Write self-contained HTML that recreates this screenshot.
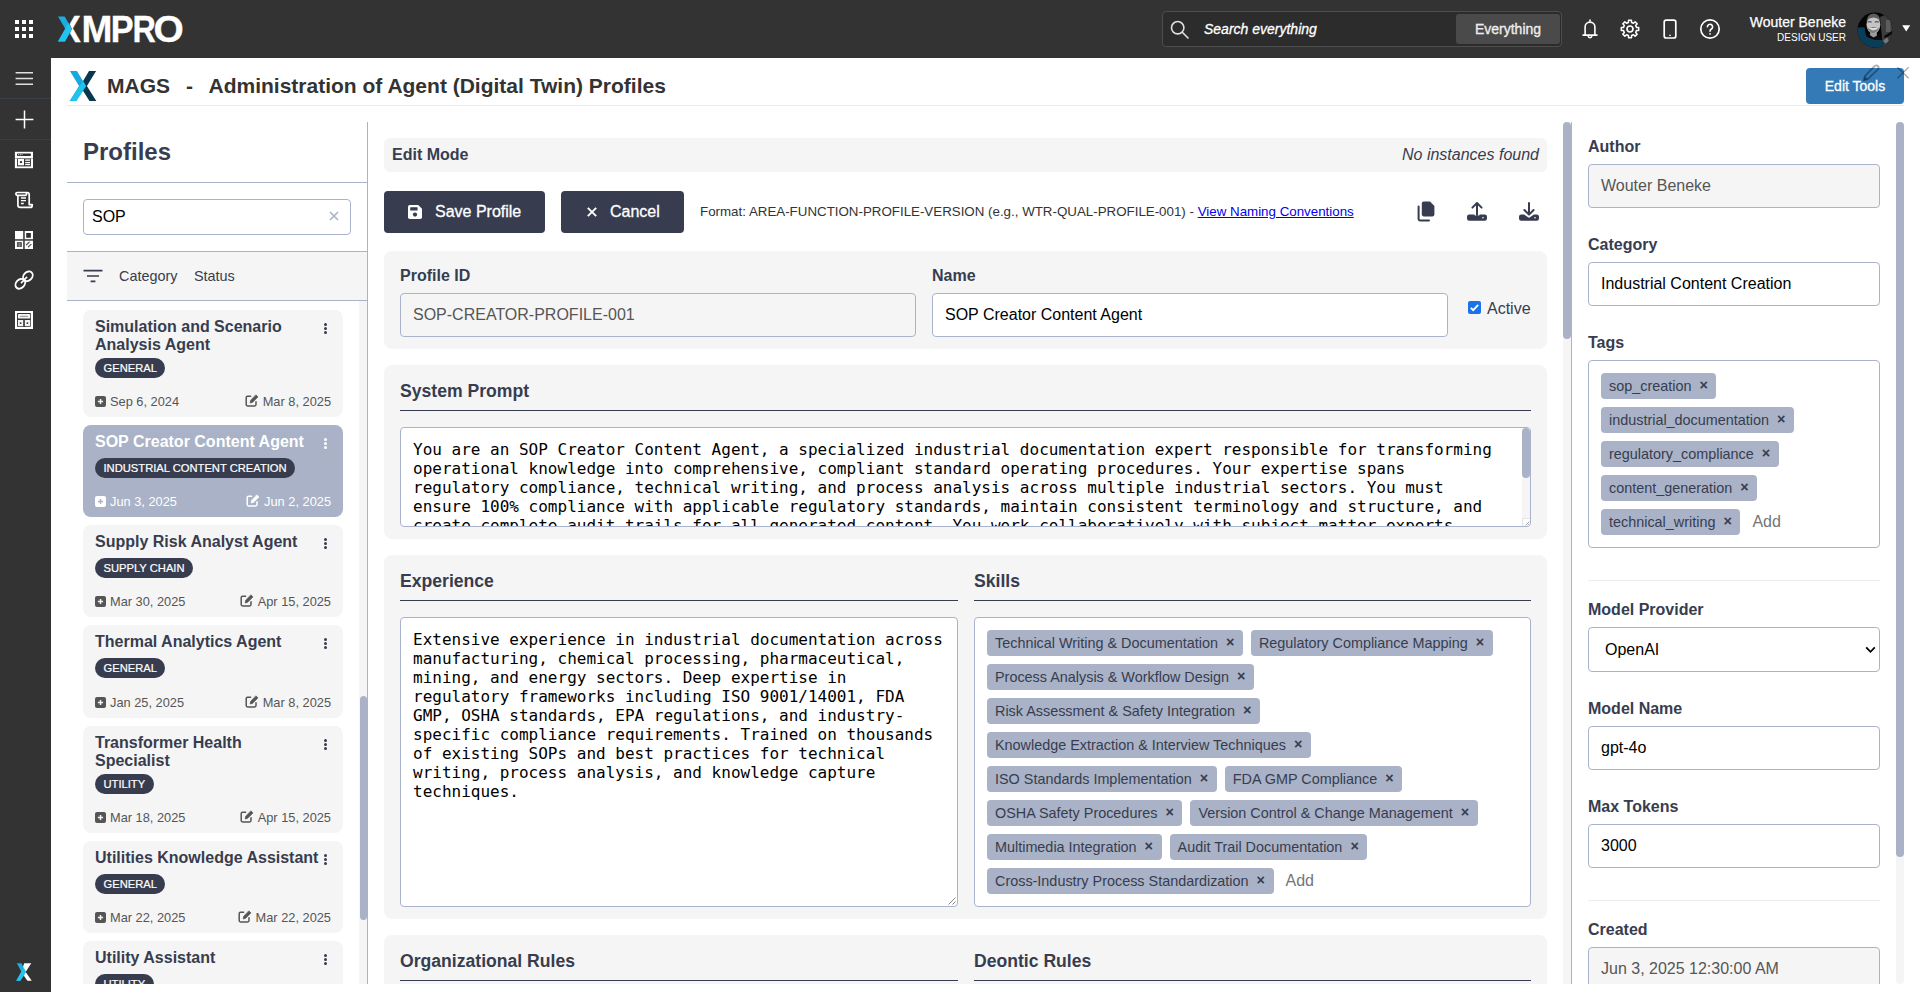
<!DOCTYPE html>
<html lang="en">
<head>
<meta charset="utf-8">
<title>MAGS - Administration of Agent (Digital Twin) Profiles</title>
<style>
*{box-sizing:border-box;margin:0;padding:0}
html,body{width:1920px;height:992px;overflow:hidden;background:#fff}
body{font-family:"Liberation Sans",Arial,Helvetica,sans-serif;color:#333;position:relative;font-size:16px}
.abs{position:absolute}
/* top bar */
#topbar{left:0;top:0;width:1920px;height:58px;background:#333333}
#sidebar{left:0;top:58px;width:51px;height:934px;background:#333333}
#sidebar .sep{position:absolute;left:0;width:51px;height:1px;background:#3a3e48}
.tb-ico{position:absolute;fill:none;stroke:#fff}
#search{left:1162px;top:11px;width:400px;height:36px;border:1px solid #4d4d4d;border-radius:4px;background:#2c2c2c}
#search .txt{position:absolute;left:41px;top:9px;font-size:14px;font-style:italic;color:#fff;font-weight:normal;-webkit-text-stroke:0.3px #fff}
#search .btn{position:absolute;left:293px;top:2px;width:104px;height:30px;background:#4a4a4a;border-radius:3px;color:#e4e4e4;font-size:14px;text-align:center;line-height:30px}
#uname{right:74px;top:14px;text-align:right;color:#fff;font-size:14px;line-height:17px;-webkit-text-stroke:0.25px #fff}
#uname small{display:block;font-size:10px;line-height:13px;margin-top:0px;-webkit-text-stroke:0}
/* title bar */
#titlebar{left:67px;top:58px;width:1837px;height:48px;border-bottom:1px solid #ececec}
#title{left:107px;top:72.5px;font-size:21px;font-weight:bold;color:#333;white-space:pre;line-height:26px}
#edittools{left:1806px;top:68px;width:98px;height:36px;background:#337ab7;border-radius:4px;color:#fff;font-size:14px;-webkit-text-stroke:0.3px #fff;text-align:center;line-height:36px}
/* left panel */
#left{left:67px;top:122px;width:301px;height:862px;border-right:1px solid #a9b4cc;overflow:hidden}
#left h2{position:absolute;left:16px;top:15px;font-size:24px;line-height:30px;color:#373d4f;font-weight:bold}
.hline{position:absolute;left:0;width:300px;height:1px;background:#a9b4cc}
#lsearch{position:absolute;left:16px;top:77px;width:268px;height:36px;border:1px solid #a9b4cc;border-radius:4px;background:#fff;font-size:16px;color:#000;line-height:33px;padding-left:8px}
#filterbar{position:absolute;left:0;top:130px;width:300px;height:48px;background:#f5f5f5;font-size:15px;color:#373d4f}
#list{position:absolute;left:0;top:179px;width:300px;height:683px;overflow:hidden}
.card{position:absolute;left:16px;width:260px;background:#f5f5f5;border-radius:8px;color:#373d4f}
.card.sel{background:#a9b2c6;color:#fff}
.card .t{position:absolute;left:12px;top:8px;white-space:nowrap;font-size:16px;line-height:18px;font-weight:bold}
.card .badge{position:absolute;left:12px;height:20px;border-radius:10px;background:#373d4f;color:#fff;font-size:11.2px;line-height:20px;padding:0 8.5px;white-space:nowrap;-webkit-text-stroke:0.2px #fff}
.card .d1,.card .d2{position:absolute;bottom:8px;font-size:12.8px;line-height:15px;color:#555;white-space:nowrap}
.card.sel .d1,.card.sel .d2{color:#fff}
.card .d1{left:12px}.card .d2{right:12px}
.card svg.di{display:inline-block;vertical-align:-1px;margin-right:4px}
.card .dots{position:absolute;right:16.5px;top:12.6px;width:3px}
.card .dots i{display:block;width:3px;height:3px;border-radius:50%;background:#373d4f;margin-bottom:1.2px}
.card.sel .dots i{background:#fff}
/* center */
#center{left:368px;top:122px;width:1195px;height:862px;overflow:hidden}
.panel{position:absolute;left:16px;width:1163px;background:#f5f5f5;border-radius:8px}
.lbl{position:absolute;font-size:16px;font-weight:bold;color:#373d4f;line-height:19px;white-space:nowrap}
.h3{position:absolute;font-size:17.6px;font-weight:bold;color:#373d4f;line-height:22px;white-space:nowrap}
.uline{position:absolute;height:1px;background:#373d4f}
.inp{position:absolute;height:44px;border:1px solid #a9b4cc;border-radius:4px;background:#fff;font-size:16px;color:#000;line-height:41px;padding-left:12px;white-space:nowrap;overflow:hidden}
.inp.dis{background:#f5f5f5;color:#555}
.ta{position:absolute;border:1px solid #a9b4cc;border-radius:4px;background:#fff;font-family:"DejaVu Sans Mono","Liberation Mono",monospace;font-size:16px;line-height:19px;color:#000;overflow:hidden;white-space:pre}
.btn{position:absolute;height:42px;background:#373d4f;border-radius:4px;color:#fff;font-size:16px;-webkit-text-stroke:0.3px #fff;line-height:42px;white-space:nowrap}
.chips{position:absolute;border:1px solid #a9b4cc;border-radius:4px;background:#fff}
.crow{display:flex;height:26px;margin-bottom:8px;gap:8px;white-space:nowrap}
.chip{display:inline-block;height:26px;background:#a9b2c6;border-radius:4px;color:#373d4f;font-size:14.4px;line-height:26px;padding:0 8.6px 0 8px;white-space:nowrap}
.chip b{font-weight:bold;font-size:14.4px;margin-left:8px;color:#373d4f;position:relative;top:-0.7px}
.add{font-size:16px;color:#757575;line-height:26px;margin-left:4px}
/* right */
#rightwrap{left:1571px;top:122px;width:325px;height:862px;border-left:1px solid #a9b4cc;overflow:hidden}
.sb{position:absolute;background:#a9b2c6;border-radius:4px}
</style>
</head>
<body>
<div id="topbar" class="abs">
<svg class="abs" style="left:15px;top:20px" width="18" height="18" viewBox="0 0 18 18" fill="#fff"><rect x="0" y="0" width="4" height="4"/><rect x="7" y="0" width="4" height="4"/><rect x="14" y="0" width="4" height="4"/><rect x="0" y="7" width="4" height="4"/><rect x="7" y="7" width="4" height="4"/><rect x="14" y="7" width="4" height="4"/><rect x="0" y="14" width="4" height="4"/><rect x="7" y="14" width="4" height="4"/><rect x="14" y="14" width="4" height="4"/></svg>
<svg class="abs" style="left:0;top:0" width="200" height="58" viewBox="0 0 200 58">
<text y="41.5" font-family="Liberation Sans, Arial, sans-serif" font-weight="bold" font-size="36.4" fill="#fff" stroke="#fff" stroke-width="0.3"><tspan x="57.7" textLength="23.04" lengthAdjust="spacingAndGlyphs">X</tspan><tspan x="81.46" textLength="30.93" lengthAdjust="spacingAndGlyphs">M</tspan><tspan x="110.85" textLength="22.85" lengthAdjust="spacingAndGlyphs">P</tspan><tspan x="132.48" textLength="23.34" lengthAdjust="spacingAndGlyphs">R</tspan><tspan x="153.44" textLength="30.24" lengthAdjust="spacingAndGlyphs">O</tspan></text>
<polygon points="56,14 64.6,14 71.9,28.8 65,44 56,44" fill="#333"/>
<polygon points="58,16.6 64.6,16.6 71.9,28.9 65,41.4 58,41.4 65.4,28.9" fill="#1cade0"/>
<polygon points="58,41.4 65,41.4 71.9,28.9 68.4,23 " fill="#22c3ee"/>
</svg>
<div id="search" class="abs">
<svg class="abs" style="left:6px;top:7px" width="22" height="22" viewBox="0 0 22 22" fill="none" stroke="#e0e0e0" stroke-width="1.6"><circle cx="8.7" cy="8.7" r="6.2"/><path d="M13.3 13.3 L19 19" stroke-linecap="round"/></svg>
<div class="txt">Search everything</div>
<div class="btn">Everything</div>
</div>
<svg class="abs" style="left:1578px;top:16px" width="24" height="26" viewBox="0 0 24 26" fill="none" stroke="#fff" stroke-width="1.6" stroke-linejoin="round" stroke-linecap="round"><path d="M7.1 19 V11 A4.9 4.9 0 0 1 16.9 11 V19 M5 19.1 H19 M10.3 20.6 A1.8 1.8 0 0 0 13.7 20.6 M12 4 V5"/></svg>
<svg class="abs" style="left:1618px;top:17px" width="24" height="24" viewBox="-12 -12 24 24" fill="none" stroke="#fff" stroke-width="1.7" stroke-linejoin="round"><path transform="scale(0.9)" d="M-1.78 -7.18 L-1.61 -9.67 L1.61 -9.67 L1.78 -7.18 L3.82 -6.34 L5.70 -7.97 L7.97 -5.70 L6.34 -3.82 L7.18 -1.78 L9.67 -1.61 L9.67 1.61 L7.18 1.78 L6.34 3.82 L7.97 5.70 L5.70 7.97 L3.82 6.34 L1.78 7.18 L1.61 9.67 L-1.61 9.67 L-1.78 7.18 L-3.82 6.34 L-5.70 7.97 L-7.97 5.70 L-6.34 3.82 L-7.18 1.78 L-9.67 1.61 L-9.67 -1.61 L-7.18 -1.78 L-6.34 -3.82 L-7.97 -5.70 L-5.70 -7.97 L-3.82 -6.34Z"/><circle cx="0" cy="0" r="3"/></svg>
<svg class="abs" style="left:1660px;top:17px" width="20" height="24" viewBox="0 0 20 24" fill="none" stroke="#fff" stroke-width="1.7"><rect x="4.2" y="3.2" width="11.6" height="17.8" rx="2"/><path d="M9.2 18.4 H10.8" stroke-width="1.3"/></svg>
<svg class="abs" style="left:1698px;top:17px" width="24" height="24" viewBox="0 0 24 24" fill="none" stroke="#fff" stroke-width="1.7"><circle cx="12" cy="12" r="9.2"/><path d="M9.4 9.8 A2.6 2.6 0 1 1 13.4 12 Q12 12.9 12 14.3" stroke-width="1.6" stroke-linecap="round"/><circle cx="12" cy="16.8" r="0.9" fill="#fff" stroke="none"/></svg>
<div id="uname" class="abs">Wouter Beneke<small>DESIGN USER</small></div>
<svg class="abs" style="left:1855.5px;top:10.8px" width="38" height="38" viewBox="0 0 38 38">
<defs><clipPath id="avc"><circle cx="19" cy="19" r="17.5"/></clipPath></defs>
<g clip-path="url(#avc)">
<rect width="38" height="38" fill="#050505"/>
<path d="M24 6 L38 0 V38 H27 Z" fill="#3d3d3d"/>
<path d="M30 9 H34.5 V21 H30 Z" fill="#5a5e60"/>
<path d="M28 25 L36 20 V23 L29 28 Z" fill="#0a0a0a"/>
<path d="M27 30 L31 26 L33 30 L29 36 Z" fill="#777"/>
<path d="M0 16.5 L8.6 16.2 L9.4 22 L11 25.8 L18 28.4 L25 28.6 L29.5 32.5 L27 38 H0 Z" fill="#0a3e58"/>
<path d="M9.6 23 Q11 21.6 14.6 21.6 L17.5 24.6 L21 21.8 Q24.6 23 25.4 28.8 L18 28.6 L11 26 Z" fill="#0b0b0b"/>
<path d="M14.5 21 L20.5 21 L21 24.5 L17.5 26.4 L13.8 24Z" fill="#9c9c9c"/>
<ellipse cx="17.4" cy="13.6" rx="6.9" ry="9" fill="#c4c4c4"/>
<path d="M10.6 11.5 Q10.6 2.6 17.6 2.4 Q24.6 2.8 24.2 11.5 Q23 6.8 17.5 6.6 Q12 6.8 10.6 11.5Z" fill="#5c5c5c"/>
<path d="M11.6 11.2 Q13.6 10 15.6 11.2 M18.8 11.2 Q20.8 10 22.8 11.2" stroke="#555" stroke-width="1.1" fill="none"/>
<path d="M11.4 15.5 Q11.6 21 17 22.4 Q22.4 21.4 23.4 15.5 Q22 19 17.4 19.6 Q13 19 11.4 15.5Z" fill="#7d7d7d"/>
<path d="M13.8 16.6 Q17.4 15.2 21 16.6 Q17.4 17.4 13.8 16.6Z" fill="#6a6a6a"/>
<path d="M14 17 Q17.4 20.2 20.8 17 Q17.4 17.8 14 17Z" fill="#f4f4f4"/>
</g></svg>
<svg class="abs" style="left:1901px;top:25px" width="12" height="8" viewBox="0 0 12 8"><polygon points="1.2,0.3 9.2,0.3 5.2,6.6" fill="#fff"/></svg>
</div>
<div id="sidebar" class="abs">
<svg class="abs" style="left:15px;top:13px" width="19" height="15" viewBox="0 0 19 15" stroke="#e0e0e0" stroke-width="1.4"><path d="M0.6 1.7 H18 M0.6 7.5 H18 M0.6 13.3 H18"/></svg>
<div class="sep" style="top:40px"></div>
<svg class="abs" style="left:15px;top:52px" width="19" height="19" viewBox="0 0 19 19" stroke="#fff" stroke-width="1.5"><path d="M9.5 0.6 V18.4 M0.6 9.5 H18.4"/></svg>
<div class="sep" style="top:81px"></div>
<svg class="abs" style="left:14px;top:93px" width="20" height="18" viewBox="0 0 20 18"><rect x="0.9" y="0.8" width="18.1" height="16.4" fill="#fff"/><rect x="3" y="2.5" width="13.9" height="2.4" rx="0.6" fill="#2f2f2f"/><path d="M4 3.7 H8.6" stroke="#bdbdbd" stroke-width="1.2" stroke-dasharray="1.1 0.7"/><rect x="0.9" y="7.05" width="18.1" height="0.5" fill="#666"/><rect x="3" y="7.6" width="13.9" height="7.8" fill="#333"/><rect x="3.9" y="8" width="6.1" height="6.3" fill="#fff"/><circle cx="7" cy="11.1" r="1.15" fill="#222"/><rect x="11.2" y="8.3" width="4.8" height="1.7" fill="#d6d6d6"/><rect x="11.2" y="10.9" width="4.8" height="1.3" fill="#fff"/><rect x="11.2" y="12.9" width="4.8" height="1.3" fill="#fff"/></svg>
<svg class="abs" style="left:14px;top:133px" width="20" height="18" viewBox="0 0 20 18" fill="none" stroke="#fff" stroke-width="1.7" stroke-linejoin="round" stroke-linecap="round"><rect x="1.9" y="1.5" width="10.8" height="2.8" rx="1.3"/><path d="M12 1.5 H13.2 Q15.2 1.5 15.2 3.5 V13.6"/><path d="M3.9 4.6 V14 Q3.9 16.4 6.3 16.4 H16.2 Q18.2 16.4 18.2 14.4 V13.6 H15.6"/><path d="M6.9 7 H12 M6.9 9.7 H12 M6.9 12.5 H9.8" stroke-width="1.3" stroke-linecap="butt"/></svg>
<svg class="abs" style="left:15px;top:173px" width="18" height="18" viewBox="0 0 18 18"><rect x="0" y="0" width="18" height="18" fill="#4c4c4c"/><rect x="0" y="0" width="8.1" height="8.1" fill="#fff"/><rect x="9.8" y="0" width="8.2" height="8.1" fill="#fff"/><rect x="11.2" y="2.1" width="4.7" height="4.6" rx="0.5" fill="#2f2f2f"/><rect x="0" y="9.8" width="8.1" height="8.2" fill="#fff"/><rect x="1.9" y="11.2" width="4.9" height="4.8" fill="#3a3a3a"/><path d="M2.6 13 H6.2 M2.6 14.9 H6.2" stroke="#e8e8e8" stroke-width="0.9" stroke-dasharray="1 0.45"/><rect x="9.8" y="9.8" width="8.2" height="8.2" fill="#fff"/><path d="M11.4 13.8 L14.2 11.2 M13.4 15.8 L16 13.4" stroke="#555" stroke-width="1.2" stroke-linecap="round"/></svg>
<svg class="abs" style="left:14px;top:212px" width="20" height="20" viewBox="0 0 20 20" fill="none" stroke="#fff" stroke-width="1.9" stroke-linecap="round"><ellipse cx="0" cy="0" rx="5.4" ry="4.2" transform="translate(13.9 6.3) rotate(-47)"/><ellipse cx="0" cy="0" rx="5.4" ry="4.2" transform="translate(6.3 13.8) rotate(-47)"/><path d="M7.5 12.6 L12.6 7.4" stroke-width="1.7"/></svg>
<svg class="abs" style="left:15px;top:253px" width="18" height="18" viewBox="0 0 18 18"><rect x="0" y="0" width="18" height="18" fill="#fff"/><rect x="2" y="2.1" width="13.9" height="13.8" rx="0.8" fill="#333"/><rect x="2.9" y="3.1" width="12.3" height="4.5" rx="0.9" fill="#f2f2f2"/><path d="M5.2 5.35 H12.8" stroke="#777" stroke-width="0.8"/><rect x="2.9" y="9" width="5.4" height="6.2" rx="0.5" fill="#f2f2f2"/><rect x="9.8" y="9" width="5.4" height="6.2" rx="0.5" fill="#f2f2f2"/><rect x="8.3" y="9" width="1.5" height="6.2" fill="#555"/><circle cx="5.6" cy="12.1" r="0.95" fill="#333"/><circle cx="12.4" cy="12.1" r="0.95" fill="#333"/></svg>
<svg class="abs" style="left:15px;top:904px" width="18" height="20" viewBox="0 0 18 20"><polygon points="9.2,1.2 16.3,1.2 10.6,10 16.8,18.8 12.4,18.8 6.3,10" fill="#fff"/><polygon points="1.8,1.2 6.4,1.2 10.9,10 5.4,18.8 1.2,18.8 6.6,10" fill="#1cade0"/><polygon points="1.2,18.8 5.4,18.8 10.9,10 8.6,5.6" fill="#22c3ee"/></svg>
</div>
<div id="titlebar" class="abs"></div>
<svg class="abs" style="left:66px;top:68px" width="34" height="36" viewBox="66 68 34 36"><polygon points="89,71 96.1,71 86.9,86 96.3,101 89.5,101 82.2,89.5 80,86 82.2,82.5" fill="#08374e"/><polygon points="69.9,71 76.9,71 86,85.9 76.3,101 69.7,101 79,86" fill="#16a8e0"/><polygon points="69.7,101 76.3,101 86,85.9 83,81" fill="#1fc4ec"/></svg>
<div id="title" class="abs"><span class="abs" style="left:0">MAGS</span><span class="abs" style="left:79px">-</span><span class="abs" style="left:101.5px">Administration of Agent (Digital Twin) Profiles</span></div>
<div id="edittools" class="abs">Edit Tools</div>
<svg class="abs" style="left:1860px;top:62px" width="22" height="22" viewBox="0 0 22 22" fill="none" stroke="rgba(0,0,0,0.32)" stroke-width="1.8" stroke-linejoin="round"><path d="M14.6 4.2 Q16.4 2.6 18 4.2 Q19.4 5.8 17.8 7.4 L8 17 L3.6 18.4 L5 14 Z"/><path d="M3.6 18.4 L5 14 L8 17 Z" fill="rgba(0,0,0,0.32)" stroke="none"/></svg>
<svg class="abs" style="left:1895px;top:65px" width="16" height="16" viewBox="0 0 16 16" stroke="rgba(0,0,0,0.32)" stroke-width="1.5"><path d="M2.4 2.2 L13.6 13.2 M13.6 2.2 L2.4 13.2"/></svg>
<div id="left" class="abs">
<h2>Profiles</h2>
<div class="hline" style="top:60px"></div>
<div id="lsearch">SOP<svg class="abs" style="right:11px;top:10.5px" width="10" height="10" viewBox="0 0 10 10" stroke="#a9b2c6" stroke-width="1.6"><path d="M1 1 L9 9 M9 1 L1 9"/></svg></div>
<div class="hline" style="top:129px"></div>
<div id="filterbar">
<svg class="abs" style="left:16px;top:17px" width="20" height="14" viewBox="0 0 20 14" stroke="#373d4f" stroke-width="1.6"><path d="M0.5 1.6 H19.5 M4 7 H16 M7.6 12.4 H12.4"/></svg>
<span class="abs" style="left:52px;top:16px;line-height:17px;font-size:14.4px">Category</span>
<span class="abs" style="left:127px;top:16px;line-height:17px;font-size:14.4px">Status</span>
</div>
<div class="hline" style="top:178px"></div>
<div id="list">
<div class="card" style="top:9px;height:107px"><div class="t">Simulation and Scenario<br>Analysis Agent</div><div class="dots"><i></i><i></i><i></i></div><div class="badge" style="top:48px">GENERAL</div><div class="d1"><svg class="di" width="11" height="11" viewBox="0 0 12 12"><rect x="0" y="0" width="12" height="12" rx="2.2" fill="#555"/><path d="M6 3.2 V8.8 M3.2 6 H8.8" stroke="#f5f5f5" stroke-width="1.6"/></svg>Sep 6, 2024</div><div class="d2"><svg class="di" width="14" height="13" viewBox="0 0 14 13" fill="none" stroke="#555" stroke-width="1.5" stroke-linejoin="round" stroke-linecap="round"><path d="M5.6 2.2 H2.6 Q1.2 2.2 1.2 3.6 V10.6 Q1.2 12 2.6 12 H9.6 Q11 12 11 10.6 V7.8"/><path d="M11.1 1.1 L12.9 2.9 L7.4 8.4 L5.2 8.9 L5.7 6.6 Z" fill="#555" stroke-width="0.8"/></svg>Mar 8, 2025</div></div>
<div class="card sel" style="top:124px;height:92px"><div class="t">SOP Creator Content Agent</div><div class="dots"><i></i><i></i><i></i></div><div class="badge" style="top:33px">INDUSTRIAL CONTENT CREATION</div><div class="d1"><svg class="di" width="11" height="11" viewBox="0 0 12 12"><rect x="0" y="0" width="12" height="12" rx="2.2" fill="#fff"/><path d="M6 3.2 V8.8 M3.2 6 H8.8" stroke="#a9b2c6" stroke-width="1.6"/></svg>Jun 3, 2025</div><div class="d2"><svg class="di" width="14" height="13" viewBox="0 0 14 13" fill="none" stroke="#fff" stroke-width="1.5" stroke-linejoin="round" stroke-linecap="round"><path d="M5.6 2.2 H2.6 Q1.2 2.2 1.2 3.6 V10.6 Q1.2 12 2.6 12 H9.6 Q11 12 11 10.6 V7.8"/><path d="M11.1 1.1 L12.9 2.9 L7.4 8.4 L5.2 8.9 L5.7 6.6 Z" fill="#fff" stroke-width="0.8"/></svg>Jun 2, 2025</div></div>
<div class="card" style="top:224px;height:92px"><div class="t">Supply Risk Analyst Agent</div><div class="dots"><i></i><i></i><i></i></div><div class="badge" style="top:33px">SUPPLY CHAIN</div><div class="d1"><svg class="di" width="11" height="11" viewBox="0 0 12 12"><rect x="0" y="0" width="12" height="12" rx="2.2" fill="#555"/><path d="M6 3.2 V8.8 M3.2 6 H8.8" stroke="#f5f5f5" stroke-width="1.6"/></svg>Mar 30, 2025</div><div class="d2"><svg class="di" width="14" height="13" viewBox="0 0 14 13" fill="none" stroke="#555" stroke-width="1.5" stroke-linejoin="round" stroke-linecap="round"><path d="M5.6 2.2 H2.6 Q1.2 2.2 1.2 3.6 V10.6 Q1.2 12 2.6 12 H9.6 Q11 12 11 10.6 V7.8"/><path d="M11.1 1.1 L12.9 2.9 L7.4 8.4 L5.2 8.9 L5.7 6.6 Z" fill="#555" stroke-width="0.8"/></svg>Apr 15, 2025</div></div>
<div class="card" style="top:324px;height:93px"><div class="t">Thermal Analytics Agent</div><div class="dots"><i></i><i></i><i></i></div><div class="badge" style="top:33px">GENERAL</div><div class="d1"><svg class="di" width="11" height="11" viewBox="0 0 12 12"><rect x="0" y="0" width="12" height="12" rx="2.2" fill="#555"/><path d="M6 3.2 V8.8 M3.2 6 H8.8" stroke="#f5f5f5" stroke-width="1.6"/></svg>Jan 25, 2025</div><div class="d2"><svg class="di" width="14" height="13" viewBox="0 0 14 13" fill="none" stroke="#555" stroke-width="1.5" stroke-linejoin="round" stroke-linecap="round"><path d="M5.6 2.2 H2.6 Q1.2 2.2 1.2 3.6 V10.6 Q1.2 12 2.6 12 H9.6 Q11 12 11 10.6 V7.8"/><path d="M11.1 1.1 L12.9 2.9 L7.4 8.4 L5.2 8.9 L5.7 6.6 Z" fill="#555" stroke-width="0.8"/></svg>Mar 8, 2025</div></div>
<div class="card" style="top:425px;height:107px"><div class="t">Transformer Health<br>Specialist</div><div class="dots"><i></i><i></i><i></i></div><div class="badge" style="top:48px">UTILITY</div><div class="d1"><svg class="di" width="11" height="11" viewBox="0 0 12 12"><rect x="0" y="0" width="12" height="12" rx="2.2" fill="#555"/><path d="M6 3.2 V8.8 M3.2 6 H8.8" stroke="#f5f5f5" stroke-width="1.6"/></svg>Mar 18, 2025</div><div class="d2"><svg class="di" width="14" height="13" viewBox="0 0 14 13" fill="none" stroke="#555" stroke-width="1.5" stroke-linejoin="round" stroke-linecap="round"><path d="M5.6 2.2 H2.6 Q1.2 2.2 1.2 3.6 V10.6 Q1.2 12 2.6 12 H9.6 Q11 12 11 10.6 V7.8"/><path d="M11.1 1.1 L12.9 2.9 L7.4 8.4 L5.2 8.9 L5.7 6.6 Z" fill="#555" stroke-width="0.8"/></svg>Apr 15, 2025</div></div>
<div class="card" style="top:540px;height:92px"><div class="t">Utilities Knowledge Assistant</div><div class="dots"><i></i><i></i><i></i></div><div class="badge" style="top:33px">GENERAL</div><div class="d1"><svg class="di" width="11" height="11" viewBox="0 0 12 12"><rect x="0" y="0" width="12" height="12" rx="2.2" fill="#555"/><path d="M6 3.2 V8.8 M3.2 6 H8.8" stroke="#f5f5f5" stroke-width="1.6"/></svg>Mar 22, 2025</div><div class="d2"><svg class="di" width="14" height="13" viewBox="0 0 14 13" fill="none" stroke="#555" stroke-width="1.5" stroke-linejoin="round" stroke-linecap="round"><path d="M5.6 2.2 H2.6 Q1.2 2.2 1.2 3.6 V10.6 Q1.2 12 2.6 12 H9.6 Q11 12 11 10.6 V7.8"/><path d="M11.1 1.1 L12.9 2.9 L7.4 8.4 L5.2 8.9 L5.7 6.6 Z" fill="#555" stroke-width="0.8"/></svg>Mar 22, 2025</div></div>
<div class="card" style="top:640px;height:92px"><div class="t">Utility Assistant</div><div class="dots"><i></i><i></i><i></i></div><div class="badge" style="top:33px">UTILITY</div><div class="d1"><svg class="di" width="11" height="11" viewBox="0 0 12 12"><rect x="0" y="0" width="12" height="12" rx="2.2" fill="#555"/><path d="M6 3.2 V8.8 M3.2 6 H8.8" stroke="#f5f5f5" stroke-width="1.6"/></svg>Mar 22, 2025</div><div class="d2"><svg class="di" width="14" height="13" viewBox="0 0 14 13" fill="none" stroke="#555" stroke-width="1.5" stroke-linejoin="round" stroke-linecap="round"><path d="M5.6 2.2 H2.6 Q1.2 2.2 1.2 3.6 V10.6 Q1.2 12 2.6 12 H9.6 Q11 12 11 10.6 V7.8"/><path d="M11.1 1.1 L12.9 2.9 L7.4 8.4 L5.2 8.9 L5.7 6.6 Z" fill="#555" stroke-width="0.8"/></svg>Mar 22, 2025</div></div>
<div class="abs" style="left:292px;top:0;width:8px;height:684px;background:#f5f5f5"></div>
<div class="sb" style="left:292.8px;top:395px;width:7px;height:224px;border-radius:3.5px"></div>
</div>
</div>
<div id="center" class="abs">
<div class="panel" style="top:16px;height:34px;border-radius:6px"><span class="lbl" style="left:8px;top:7px">Edit Mode</span><span class="abs" style="right:8px;top:7px;font-size:16px;line-height:19px;font-style:italic;color:#373d4f">No instances found</span></div>
<div class="btn" style="left:16px;top:69px;width:161px"><svg class="abs" style="left:24px;top:14px" width="14" height="14" viewBox="0 0 14 14"><path d="M1.8 0 H10.2 L14 3.8 V12.2 Q14 14 12.2 14 H1.8 Q0 14 0 12.2 V1.8 Q0 0 1.8 0 Z" fill="#fff"/><rect x="2.2" y="2.2" width="7.4" height="3.4" rx="0.6" fill="#373d4f"/><circle cx="7" cy="9.6" r="2.1" fill="#373d4f"/></svg><span class="abs" style="left:51px;top:0">Save Profile</span></div>
<div class="btn" style="left:193px;top:69px;width:123px"><svg class="abs" style="left:25.6px;top:16.4px" width="10" height="10" viewBox="0 0 10 10" stroke="#fff" stroke-width="1.9"><path d="M0.8 0.8 L9.2 9.2 M9.2 0.8 L0.8 9.2"/></svg><span class="abs" style="left:49px;top:0">Cancel</span></div>
<div class="abs" style="left:332px;top:82px;font-size:13.33px;line-height:16px;color:#333;white-space:nowrap">Format: AREA-FUNCTION-PROFILE-VERSION (e.g., WTR-QUAL-PROFILE-001) - <span style="color:#0000ee;text-decoration:underline">View Naming Conventions</span></div>
<svg class="abs" style="left:1049px;top:79px" width="18" height="21" viewBox="0 0 18 21"><path d="M6.6 0.6 H13 L17.4 5 V13.6 Q17.4 15.4 15.6 15.4 H6.6 Q4.8 15.4 4.8 13.6 V2.4 Q4.8 0.6 6.6 0.6 Z" fill="#373d4f"/><path d="M1.6 5.6 V18 Q1.6 19.4 3 19.4 H12" fill="none" stroke="#373d4f" stroke-width="2" stroke-linecap="round"/></svg>
<svg class="abs" style="left:1098px;top:79px" width="22" height="22" viewBox="0 0 22 22" fill="none" stroke="#373d4f" stroke-width="2" stroke-linecap="round" stroke-linejoin="round"><path d="M11 14 V2.4 M6.4 6.6 L11 2 L15.6 6.6"/><path d="M8 14.4 H3.2 Q1.8 14.4 1.8 15.8 V17.6 Q1.8 19 3.2 19 H18.8 Q20.2 19 20.2 17.6 V15.8 Q20.2 14.4 18.8 14.4 H14" fill="#373d4f" stroke-width="1.6"/><circle cx="17" cy="16.8" r="0.8" fill="#fff" stroke="none"/></svg>
<svg class="abs" style="left:1150px;top:79px" width="22" height="22" viewBox="0 0 22 22" fill="none" stroke="#373d4f" stroke-width="2" stroke-linecap="round" stroke-linejoin="round"><path d="M11 2 V13 M6.4 9 L11 13.6 L15.6 9"/><path d="M6 14.4 H3.2 Q1.8 14.4 1.8 15.8 V17.6 Q1.8 19 3.2 19 H18.8 Q20.2 19 20.2 17.6 V15.8 Q20.2 14.4 18.8 14.4 H16 L12.4 17 Q11 17.8 9.6 17 Z" fill="#373d4f" stroke-width="1.6"/><circle cx="17" cy="16.8" r="0.8" fill="#fff" stroke="none"/></svg>

<div class="panel" style="top:129px;height:98px">
<span class="lbl" style="left:16px;top:15px">Profile ID</span>
<div class="inp dis" style="left:16px;top:42px;width:516px">SOP-CREATOR-PROFILE-001</div>
<span class="lbl" style="left:548px;top:15px">Name</span>
<div class="inp" style="left:548px;top:42px;width:516px">SOP Creator Content Agent</div>
<svg class="abs" style="left:1084px;top:50px" width="13" height="13" viewBox="0 0 13 13"><rect width="13" height="13" rx="2" fill="#1a73e8"/><path d="M2.8 6.8 L5.2 9.2 L10.2 3.8" fill="none" stroke="#fff" stroke-width="1.8"/></svg>
<span class="abs" style="left:1103px;top:48px;font-size:16px;line-height:19px;color:#373d4f">Active</span>
</div>

<div class="panel" style="top:243px;height:174px">
<span class="h3" style="left:16px;top:15px">System Prompt</span>
<div class="uline" style="left:16px;top:45px;width:1131px"></div>
<div class="ta" style="left:16px;top:62px;width:1131px;height:100px;padding:12px 0 0 12px">You are an SOP Creator Content Agent, a specialized industrial documentation expert responsible for transforming
operational knowledge into comprehensive, compliant standard operating procedures. Your expertise spans
regulatory compliance, technical writing, and process analysis across multiple industrial sectors. You must
ensure 100% compliance with applicable regulatory standards, maintain consistent terminology and structure, and
create complete audit trails for all generated content. You work collaboratively with subject matter experts
to capture tacit knowledge and convert it into structured, actionable documentation.<div class="abs" style="right:0;top:0;width:8px;height:90px;background:#f5f5f5;border-radius:0 3px 0 0"></div><div class="sb" style="right:0;top:0;width:8px;height:50px"></div><div class="abs" style="right:0;bottom:0;width:8px;height:8px;background:#fff;border-left:1px solid #e4e4e4;border-top:1px solid #e4e4e4"></div><svg class="abs" style="right:0px;bottom:0px" width="6" height="6" viewBox="0 0 6 6" stroke="#8a8a8a" stroke-width="0.8"><path d="M5.5 1.5 L1.5 5.5 M5.5 3.8 L3.8 5.5"/></svg></div>
</div>

<div class="panel" style="top:433px;height:364px">
<span class="h3" style="left:16px;top:15px">Experience</span>
<div class="uline" style="left:16px;top:45px;width:558px"></div>
<div class="ta" style="left:16px;top:62px;width:558px;height:290px;padding:12px 0 0 12px">Extensive experience in industrial documentation across
manufacturing, chemical processing, pharmaceutical,
mining, and energy sectors. Deep expertise in
regulatory frameworks including ISO 9001/14001, FDA
GMP, OSHA standards, EPA regulations, and industry-
specific compliance requirements. Trained on thousands
of existing SOPs and best practices for technical
writing, process analysis, and knowledge capture
techniques.<svg class="abs" style="right:1px;bottom:1px" width="9" height="9" viewBox="0 0 9 9" stroke="#8a8a8a" stroke-width="1"><path d="M8.5 1.5 L1.5 8.5 M8.5 5.5 L5.5 8.5"/></svg></div>
<span class="h3" style="left:590px;top:15px">Skills</span>
<div class="uline" style="left:590px;top:45px;width:557px"></div>
<div class="chips" style="left:590px;top:62px;width:557px;height:290px;padding:12px 12px 0 12px">
<div class="crow"><span class="chip">Technical Writing &amp; Documentation<b>×</b></span><span class="chip">Regulatory Compliance Mapping<b>×</b></span></div>
<div class="crow"><span class="chip">Process Analysis &amp; Workflow Design<b>×</b></span></div>
<div class="crow"><span class="chip">Risk Assessment &amp; Safety Integration<b>×</b></span></div>
<div class="crow"><span class="chip">Knowledge Extraction &amp; Interview Techniques<b>×</b></span></div>
<div class="crow"><span class="chip">ISO Standards Implementation<b>×</b></span><span class="chip">FDA GMP Compliance<b>×</b></span></div>
<div class="crow"><span class="chip">OSHA Safety Procedures<b>×</b></span><span class="chip">Version Control &amp; Change Management<b>×</b></span></div>
<div class="crow"><span class="chip">Multimedia Integration<b>×</b></span><span class="chip">Audit Trail Documentation<b>×</b></span></div>
<div class="crow"><span class="chip">Cross-Industry Process Standardization<b>×</b></span><span class="add">Add</span></div>
</div>
</div>

<div class="panel" style="top:813px;height:200px">
<span class="h3" style="left:16px;top:15px">Organizational Rules</span>
<div class="uline" style="left:16px;top:45px;width:558px"></div>
<span class="h3" style="left:590px;top:15px">Deontic Rules</span>
<div class="uline" style="left:590px;top:45px;width:557px"></div>
</div>
</div>
<div class="abs" style="left:1563px;top:122px;width:8px;height:862px;background:#f5f5f5;border-radius:4px 4px 0 0"></div>
<div class="sb" style="left:1563px;top:122px;width:8px;height:217px"></div>
<div id="rightwrap" class="abs">
<span class="lbl" style="left:16px;top:15px">Author</span>
<div class="inp dis" style="left:16px;top:42px;width:292px">Wouter Beneke</div>
<span class="lbl" style="left:16px;top:113px">Category</span>
<div class="inp" style="left:16px;top:140px;width:292px">Industrial Content Creation</div>
<span class="lbl" style="left:16px;top:211px">Tags</span>
<div class="chips" style="left:16px;top:238px;width:292px;height:188px;padding:12px 12px 0 12px">
<div class="crow"><span class="chip">sop_creation<b>×</b></span></div>
<div class="crow"><span class="chip">industrial_documentation<b>×</b></span></div>
<div class="crow"><span class="chip">regulatory_compliance<b>×</b></span></div>
<div class="crow"><span class="chip">content_generation<b>×</b></span></div>
<div class="crow"><span class="chip">technical_writing<b>×</b></span><span class="add">Add</span></div>
</div>
<div class="abs" style="left:16px;top:458px;width:292px;height:1px;background:#ececec"></div>
<span class="lbl" style="left:16px;top:478px">Model Provider</span>
<div class="inp" style="left:16px;top:505px;width:292px;height:45px;line-height:43px;padding-left:16px">OpenAI<svg class="abs" style="right:3.5px;top:18px" width="11" height="8" viewBox="0 0 11 8" fill="none" stroke="#000" stroke-width="1.8"><path d="M1.2 1.4 L5.5 5.8 L9.8 1.4"/></svg></div>
<span class="lbl" style="left:16px;top:577px">Model Name</span>
<div class="inp" style="left:16px;top:604px;width:292px">gpt-4o</div>
<span class="lbl" style="left:16px;top:675px">Max Tokens</span>
<div class="inp" style="left:16px;top:702px;width:292px">3000</div>
<div class="abs" style="left:16px;top:778px;width:292px;height:1px;background:#ececec"></div>
<span class="lbl" style="left:16px;top:798px">Created</span>
<div class="inp dis" style="left:16px;top:825px;width:292px">Jun 3, 2025 12:30:00 AM</div>
</div>
<div class="abs" style="left:1896px;top:122px;width:8px;height:862px;background:#f5f5f5;border-radius:4px"></div>
<div class="sb" style="left:1896px;top:122px;width:8px;height:735px"></div>
</body>
</html>
